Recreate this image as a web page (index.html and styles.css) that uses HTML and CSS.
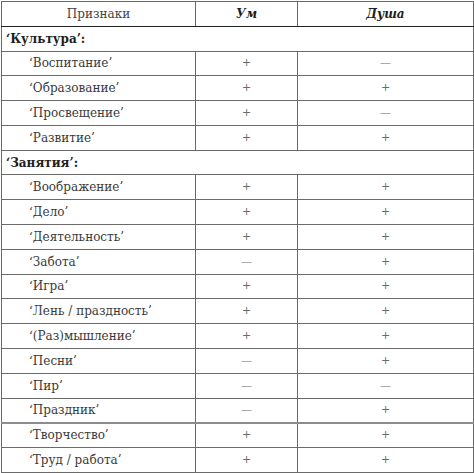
FILE: index.html
```html
<!DOCTYPE html>
<html lang="ru">
<head>
<meta charset="utf-8">
<title>Признаки</title>
<link rel="stylesheet" href="styles.css">
</head>
<body>
<table class="grid">
  <colgroup>
    <col class="c1"><col class="c2"><col class="c3">
  </colgroup>
  <thead>
    <tr class="head">
      <th class="h-plain">Признаки</th>
      <th class="h-em">Ум</th>
      <th class="h-em">Душа</th>
    </tr>
  </thead>
  <tbody>
    <tr class="group"><td colspan="3">‘Культура’:</td></tr>
    <tr><td class="name">‘Воспитание’</td><td class="mark">+</td><td class="mark">—</td></tr>
    <tr><td class="name">‘Образование’</td><td class="mark">+</td><td class="mark">+</td></tr>
    <tr><td class="name">‘Просвещение’</td><td class="mark">+</td><td class="mark">—</td></tr>
    <tr><td class="name">‘Развитие’</td><td class="mark">+</td><td class="mark">+</td></tr>
    <tr class="group"><td colspan="3">‘Занятия’:</td></tr>
    <tr><td class="name">‘Воображение’</td><td class="mark">+</td><td class="mark">+</td></tr>
    <tr><td class="name">‘Дело’</td><td class="mark">+</td><td class="mark">+</td></tr>
    <tr><td class="name">‘Деятельность’</td><td class="mark">+</td><td class="mark">+</td></tr>
    <tr><td class="name">‘Забота’</td><td class="mark">—</td><td class="mark">+</td></tr>
    <tr><td class="name">‘Игра’</td><td class="mark">+</td><td class="mark">+</td></tr>
    <tr><td class="name">‘Лень / праздность’</td><td class="mark">+</td><td class="mark">+</td></tr>
    <tr><td class="name">‘(Раз)мышление’</td><td class="mark">+</td><td class="mark">+</td></tr>
    <tr><td class="name">‘Песни’</td><td class="mark">—</td><td class="mark">+</td></tr>
    <tr><td class="name">‘Пир’</td><td class="mark">—</td><td class="mark">—</td></tr>
    <tr><td class="name">‘Праздник’</td><td class="mark">—</td><td class="mark">+</td></tr>
    <tr class="soft-top"><td class="name">‘Творчество’</td><td class="mark">+</td><td class="mark">+</td></tr>
    <tr><td class="name">‘Труд / работа’</td><td class="mark">+</td><td class="mark">+</td></tr>
  </tbody>
</table>
</body>
</html>
```
FILE: styles.css
```css
html, body {
  margin: 0;
  padding: 0;
  background: #ffffff;
}
body {
  padding: 1px 0 0 1px;
  font-family: "DejaVu Serif", "Liberation Serif", serif;
  color: #2e2e2e;
}
.grid {
  border-collapse: collapse;
  table-layout: fixed;
  width: 472px;
  border: 1px solid #444;
}
.c1 { width: 194px; }
.c2 { width: 102px; }
.c3 { width: 176px; }
.grid tr {
  height: 24.79px;
}
.grid th, .grid td {
  padding: 0;
  border: 1px solid #6a6a6a;
  font-size: 12px;
  line-height: 14px;
  vertical-align: middle;
}
.head th {
  border-bottom: 1px solid #222;
  font-weight: normal;
  text-align: center;
}
.h-plain {
  color: #444;
}
.h-em {
  font-weight: bold !important;
  font-style: italic;
  color: #1e1e1e;
}
.group td {
  font-weight: bold;
  padding-left: 4px;
  color: #1e1e1e;
}
.name {
  padding-left: 27px !important;
  color: #3a3a3a;
}
.mark {
  text-align: center;
  color: #6a6a6a;
  font-size: 11px !important;
}
.soft-top td {
  border-top: 2px solid #8c8c8c;
}
```
